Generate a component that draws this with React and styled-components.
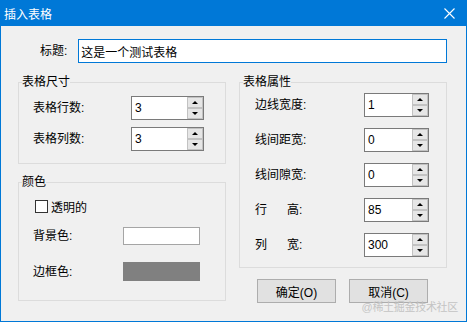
import React from 'react';
import styled, { createGlobalStyle } from 'styled-components';

const Global = createGlobalStyle`
    body {
        margin: 0;
        font-family: "Liberation Sans", "Noto Sans CJK SC", sans-serif;
        font-size: 12px;
        color: #000;
    }
`;

const Win = styled.div`
    position: relative;
    width: 467px;
    height: 322px;
    box-sizing: border-box;
    border: 1px solid #0078d7;
    background: #f0f0f0;
    display: flex;
    flex-direction: column;
`;

const TitleBar = styled.div`
    height: 25px;
    background: #0078d7;
    color: white;
    display: flex;
    align-items: center;
    justify-content: space-between;
    padding-left: 3px;
    font-size: 12px;
`;

const Close = styled.div`
    width: 32px;
    height: 25px;
    display: flex;
    align-items: center;
    justify-content: center;
    margin-right: 1px;
`;

const TitleRow = styled.div`
    display: flex;
    align-items: center;
    margin-top: 13px;
    padding-left: 39px;
`;

const Label = styled.span`
    display: inline-block;
    width: ${p => p.w || 'auto'};
    margin-left: ${p => p.ml || 0}px;
    line-height: 16px;
    white-space: pre;
`;

const TextInput = styled.div`
    margin-left: 11px;
    width: 369px;
    height: 24px;
    box-sizing: border-box;
    border: 1px solid #0078d7;
    background: white;
    display: flex;
    align-items: center;
    padding-left: 2px;
`;

const Columns = styled.div`
    display: flex;
    gap: 13px;
    margin-top: 11px;
    padding-left: 17px;
`;

const Col = styled.div`
    width: 208px;
    display: flex;
    flex-direction: column;
    gap: ${p => p.gap || 0}px;
`;

const Group = styled.fieldset`
    margin: 0;
    padding: 0;
    border: 1px solid #dcdcdc;
    min-width: 0;
    ${p => p.h && `height: ${p.h}px;`}
`;

const Legend = styled.legend`
    margin-left: 3px;
    padding: 0;
    line-height: 16px;
    font-size: 12px;
`;

const GroupBody = styled.div`
    display: flex;
    flex-direction: column;
    gap: ${p => p.gap}px;
    padding: ${p => p.pad};
`;

const Row = styled.div`
    display: flex;
    align-items: center;
    margin-top: ${p => p.mt || 0}px;
`;

const Spin = styled.div`
    width: ${p => p.w}px;
    height: 24px;
    box-sizing: border-box;
    border: 1px solid #7a7a7a;
    background: white;
    display: flex;
    align-items: center;
`;

const SpinValue = styled.span`
    flex: 1;
    padding-left: 3px;
`;

const SpinBtns = styled.div`
    width: 16px;
    height: 22px;
    display: flex;
    flex-direction: column;
`;

const SpinBtn = styled.div`
    flex: 1;
    box-sizing: border-box;
    border: 1px solid #c2c2c2;
    background: #e6e6e6;
    display: flex;
    align-items: center;
    justify-content: center;
`;

const Tri = styled.span`
    width: 0;
    height: 0;
    border-left: 3px solid transparent;
    border-right: 3px solid transparent;
    ${p => p.up ? 'border-bottom: 3px solid #000;' : 'border-top: 3px solid #000;'}
`;

const Check = styled.span`
    width: 13px;
    height: 13px;
    box-sizing: border-box;
    border: 1px solid #333;
    background: white;
    margin-left: 16px;
    margin-right: 3px;
`;

const Swatch = styled.div`
    width: 77px;
    height: ${p => p.h}px;
    box-sizing: border-box;
    background: ${p => p.color};
    border: 1px solid ${p => p.edge};
`;

const Buttons = styled.div`
    display: flex;
    gap: 13px;
    margin-top: 11px;
    padding-left: 18px;
`;

const Button = styled.div`
    width: 79px;
    height: 24px;
    box-sizing: border-box;
    border: 1px solid #adadad;
    background: #e1e1e1;
    display: flex;
    align-items: center;
    justify-content: center;
`;

const Watermark = styled.div`
    position: absolute;
    right: 8px;
    bottom: 7px;
    font-size: 11px;
    color: #c4c4c4;
    letter-spacing: -0.3px;
`;

const Spinner = ({ value, w }) => (
    <Spin w={w}>
        <SpinValue>{value}</SpinValue>
        <SpinBtns>
            <SpinBtn><Tri up /></SpinBtn>
            <SpinBtn><Tri /></SpinBtn>
        </SpinBtns>
    </Spin>
);

const props = [
    ['边线宽度:', '1'],
    ['线间距宽:', '0'],
    ['线间隙宽:', '0'],
    ['行      高:', '85'],
    ['列      宽:', '300'],
];

const App = () => {
    return (
        <Win>
            <Global />
            <TitleBar>
                <span>插入表格</span>
                <Close>
                    <svg width="11" height="11" viewBox="0 0 11 11">
                        <path d="M0.5 0.5 L10.5 10.5 M10.5 0.5 L0.5 10.5" stroke="#fff" strokeWidth="1.1" />
                    </svg>
                </Close>
            </TitleBar>
            <TitleRow>
                <Label>标题:</Label>
                <TextInput>这是一个测试表格</TextInput>
            </TitleRow>
            <Columns>
                <Col gap={10}>
                    <Group h={88}>
                        <Legend>表格尺寸</Legend>
                        <GroupBody gap={7} pad="6px 0 0 14px">
                            <Row><Label w="98px">表格行数:</Label><Spinner value="3" w={73} /></Row>
                            <Row><Label w="98px">表格列数:</Label><Spinner value="3" w={73} /></Row>
                        </GroupBody>
                    </Group>
                    <Group>
                        <Legend>颜色</Legend>
                        <GroupBody gap={0} pad="8px 0 19px 0">
                            <Row><Check />透明的</Row>
                            <Row mt={12}>
                                <Label w="90px" ml={14}>背景色:</Label>
                                <Swatch h={18} color="#fff" edge="#a5a5a5" />
                            </Row>
                            <Row mt={17}>
                                <Label w="90px" ml={14}>边框色:</Label>
                                <Swatch h={19} color="#808080" edge="#808080" />
                            </Row>
                        </GroupBody>
                    </Group>
                </Col>
                <Col>
                    <Group>
                        <Legend>表格属性</Legend>
                        <GroupBody gap={11} pad="3px 0 10px 15px">
                            {props.map(([k, v]) => (
                                <Row key={k}><Label w="109px">{k}</Label><Spinner value={v} w={65} /></Row>
                            ))}
                        </GroupBody>
                    </Group>
                    <Buttons>
                        <Button>确定(O)</Button>
                        <Button>取消(C)</Button>
                    </Buttons>
                </Col>
            </Columns>
            <Watermark>@稀土掘金技术社区</Watermark>
        </Win>
    );
};

export default App;
